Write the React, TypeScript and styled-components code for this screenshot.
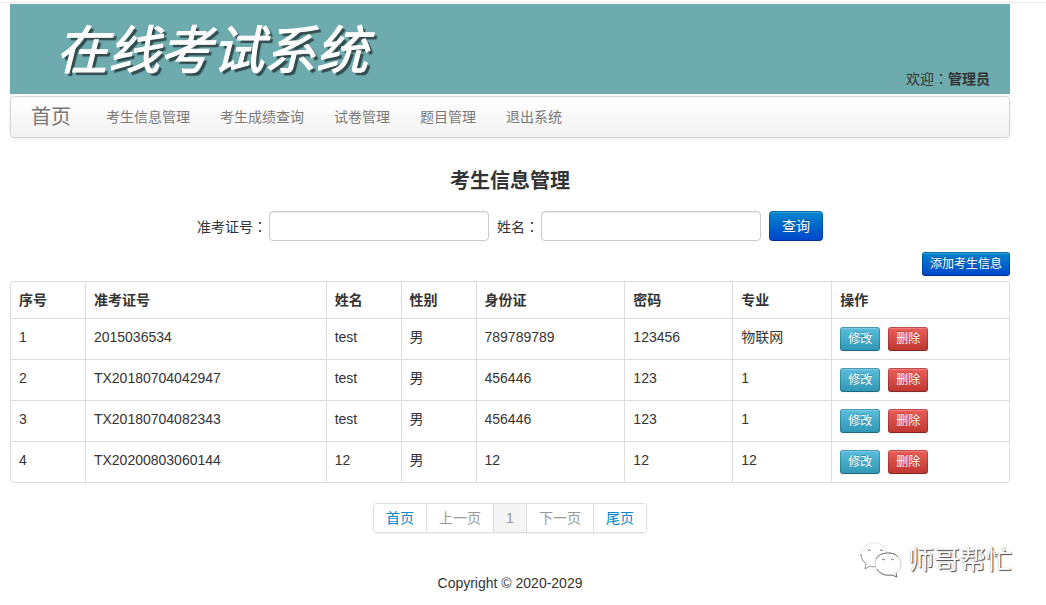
import React from "react";
import styled, { createGlobalStyle, css } from "styled-components";

const GlobalStyle = createGlobalStyle`
  * { box-sizing: border-box; }
  body {
    margin: 0;
    background: #fff;
    color: #333;
    font: 14px/20px "Liberation Sans", "Noto Sans CJK SC", sans-serif;
  }
  button, input { font-family: inherit; }
`;

const Page = styled.div`
  position: relative;
  padding: 1px 36px 12px 10px;
`;

const TopRule = styled.div`
  height: 1px;
  margin: 1px -36px 1px -10px;
  background: #e8e8e8;
`;

const Banner = styled.header`
  display: flex;
  justify-content: space-between;
  height: 90px;
  padding: 0 20px 5px 46px;
  background: #6eabae;
`;

const SystemName = styled.h1`
  margin: 12px 0 0;
  color: #fff;
  font-size: 52px;
  font-style: italic;
  font-weight: 400;
  line-height: 70px;
  -webkit-text-stroke: 1px #fff;
  text-shadow: 3px 3px 1px #334b4d;
`;

const Welcome = styled.p`
  align-self: flex-end;
  margin: 0;
`;

const Colon = styled.span`
  font-family: "Noto Sans CJK TC", sans-serif;
`;

const NavBar = styled.nav`
  display: flex;
  margin-top: 2px;
  border: 1px solid #d4d4d4;
  border-radius: 4px;
  background: linear-gradient(#fff, #f2f2f2);
  box-shadow: 0 1px 4px rgba(0, 0, 0, 0.065);
`;

const NavLink = styled.a<{ $brand?: boolean }>`
  padding: 10px ${(p) => (p.$brand ? 20 : 15)}px;
  color: #777;
  font-size: ${(p) => (p.$brand ? 20 : 14)}px;
  text-decoration: none;
  text-shadow: 0 1px 0 #fff;
`;

const Heading = styled.h2`
  margin: 23px 0 10px;
  font-size: 20px;
  line-height: 40px;
  text-align: center;
`;

const SearchForm = styled.form`
  display: flex;
  justify-content: center;
  align-items: center;
  gap: 8px;
`;

const Field = styled.label`
  display: flex;
  align-items: center;
  gap: 2px;
`;

const TextInput = styled.input`
  width: 220px;
  height: 30px;
  padding: 4px 6px;
  border: 1px solid #ccc;
  border-radius: 4px;
  background: #fff;
  box-shadow: inset 0 1px 1px rgba(0, 0, 0, 0.075);
  color: #555;
  font-size: 14px;
`;

const tones = {
  primary: ["#0088cc", "#0044cc"],
  info: ["#5bc0de", "#2f96b4"],
  danger: ["#ee5f5b", "#bd362f"],
};

const Button = styled.button<{ $tone: keyof typeof tones; $small?: boolean }>`
  border: 1px solid rgba(0, 0, 0, 0.2);
  border-bottom-color: rgba(0, 0, 0, 0.3);
  color: #fff;
  background: linear-gradient(${(p) => tones[p.$tone].join(", ")}) border-box;
  box-shadow: inset 0 1px 0 rgba(255, 255, 255, 0.2), 0 1px 2px rgba(0, 0, 0, 0.05);
  text-shadow: 0 -1px 0 rgba(0, 0, 0, 0.25);
  cursor: pointer;
  ${(p) =>
    p.$small
      ? css`
          height: 24px;
          padding: 0 7px;
          border-radius: 3px;
          font-size: 12px;
          line-height: 20px;
        `
      : css`
          height: 30px;
          padding: 0 12px;
          border-radius: 4px;
          font-size: 14px;
          line-height: 20px;
        `}
`;

const Toolbar = styled.div`
  display: flex;
  justify-content: flex-end;
  margin: 11px 0 5px;
`;

const Table = styled.table`
  width: 100%;
  table-layout: fixed;
  border: 1px solid #ddd;
  border-left: 0;
  border-radius: 4px;
  border-spacing: 0;

  th, td {
    padding: 8px;
    border-left: 1px solid #ddd;
    text-align: left;
    vertical-align: top;
  }
  td { border-top: 1px solid #ddd; }
  thead th:first-child { border-top-left-radius: 4px; }
  tbody tr:last-child td:first-child { border-bottom-left-radius: 4px; }
`;

const Column = styled.col<{ $share: number }>`
  width: ${(p) => p.$share}%;
`;

const Actions = styled.div`
  display: flex;
  gap: 8px;
`;

const Pagination = styled.nav`
  display: flex;
  width: fit-content;
  margin: 20px auto 0;
  border: 1px solid #ddd;
  border-radius: 4px;
  box-shadow: 0 1px 2px rgba(0, 0, 0, 0.05);
`;

const PageLink = styled.a<{ $muted?: boolean; $current?: boolean }>`
  padding: 4px 12px;
  color: ${(p) => (p.$muted || p.$current ? "#999" : "#0088cc")};
  background: ${(p) => (p.$current ? "#f5f5f5" : "#fff")};
  text-decoration: none;
  border-radius: 3px;

  & + & {
    border-left: 1px solid #ddd;
    border-radius: 0;
  }
  &:last-child { border-radius: 0 3px 3px 0; }
`;

const Footer = styled.footer`
  margin-top: 40px;
  text-align: center;
`;

const Watermark = styled.div`
  position: absolute;
  right: 34px;
  bottom: 25px;
  display: flex;
  align-items: center;
  gap: 6px;
  color: #fff;
  font-size: 26px;
  line-height: 40px;
  text-shadow: 1px 1px 1px #444, 0 0 1px #999;
`;

const columns: [string, number][] = [
  ["序号", 7.5],
  ["准考证号", 24.1],
  ["姓名", 7.5],
  ["性别", 7.5],
  ["身份证", 14.9],
  ["密码", 10.8],
  ["专业", 9.9],
  ["操作", 17.8],
];

const students = [
  ["1", "2015036534", "test", "男", "789789789", "123456", "物联网"],
  ["2", "TX20180704042947", "test", "男", "456446", "123", "1"],
  ["3", "TX20180704082343", "test", "男", "456446", "123", "1"],
  ["4", "TX20200803060144", "12", "男", "12", "12", "12"],
];

function ChatBubbles() {
  return (
    <svg width="42" height="36" viewBox="0 0 42 36" fill="none" stroke="#777" strokeWidth="1" aria-hidden="true">
      <path d="M16 25c-2 0-4 0-6-1l-5 3 1-5C2 19 1 16 1 13 1 6 7 1 14 1c6 0 11 3 13 9" stroke="#ddd" strokeDasharray="2 1" />
      <path d="M1 12c0 4 2 7 5 10l-1 5 5-3c2 1 4 1 6 0" stroke="#999" />
      <path d="M28 11c7 0 13 5 13 11 0 4-2 7-5 9l1 4-5-2c-9 2-17-3-17-11 0-6 6-11 13-11Z" fill="#fff" stroke="#ccc" />
      <path d="M16 17c2-4 6-6 12-6 5 0 8 1 10 4M17 27c3 5 9 7 15 6l5 2-1-4" stroke="#777" />
      <path d="M8 9q1-3 3 0M20 9q1-3 3 0M22 18q1-2 3 0M31 18q1-2 3 0" />
    </svg>
  );
}

export default function App() {
  return (
    <Page>
      <GlobalStyle />
      <TopRule />
      <Banner>
        <SystemName>在线考试系统</SystemName>
        <Welcome>
          欢迎<Colon>：</Colon>
          <strong>管理员</strong>
        </Welcome>
      </Banner>
      <NavBar>
        <NavLink href="#" $brand>首页</NavLink>
        {["考生信息管理", "考生成绩查询", "试卷管理", "题目管理", "退出系统"].map((name) => (
          <NavLink href="#" key={name}>{name}</NavLink>
        ))}
      </NavBar>
      <main>
        <Heading>考生信息管理</Heading>
        <SearchForm onSubmit={(e) => e.preventDefault()}>
          <Field>
            <span>准考证号<Colon>：</Colon></span>
            <TextInput type="text" name="ticket" />
          </Field>
          <Field>
            <span>姓名<Colon>：</Colon></span>
            <TextInput type="text" name="name" />
          </Field>
          <Button type="submit" $tone="primary">查询</Button>
        </SearchForm>
        <Toolbar>
          <Button type="button" $tone="primary" $small>添加考生信息</Button>
        </Toolbar>
        <Table>
          <colgroup>
            {columns.map(([name, share]) => <Column key={name} $share={share} />)}
          </colgroup>
          <thead>
            <tr>
              {columns.map(([name]) => <th key={name} scope="col">{name}</th>)}
            </tr>
          </thead>
          <tbody>
            {students.map((student) => (
              <tr key={student[0]}>
                {student.map((value, i) => <td key={i}>{value}</td>)}
                <td>
                  <Actions>
                    <Button type="button" $tone="info" $small>修改</Button>
                    <Button type="button" $tone="danger" $small>删除</Button>
                  </Actions>
                </td>
              </tr>
            ))}
          </tbody>
        </Table>
        <Pagination aria-label="分页">
          <PageLink href="#">首页</PageLink>
          <PageLink href="#" $muted>上一页</PageLink>
          <PageLink href="#" $current aria-current="page">1</PageLink>
          <PageLink href="#" $muted>下一页</PageLink>
          <PageLink href="#">尾页</PageLink>
        </Pagination>
      </main>
      <Footer>Copyright © 2020-2029</Footer>
      <Watermark>
        <ChatBubbles />
        <span>师哥帮忙</span>
      </Watermark>
    </Page>
  );
}
